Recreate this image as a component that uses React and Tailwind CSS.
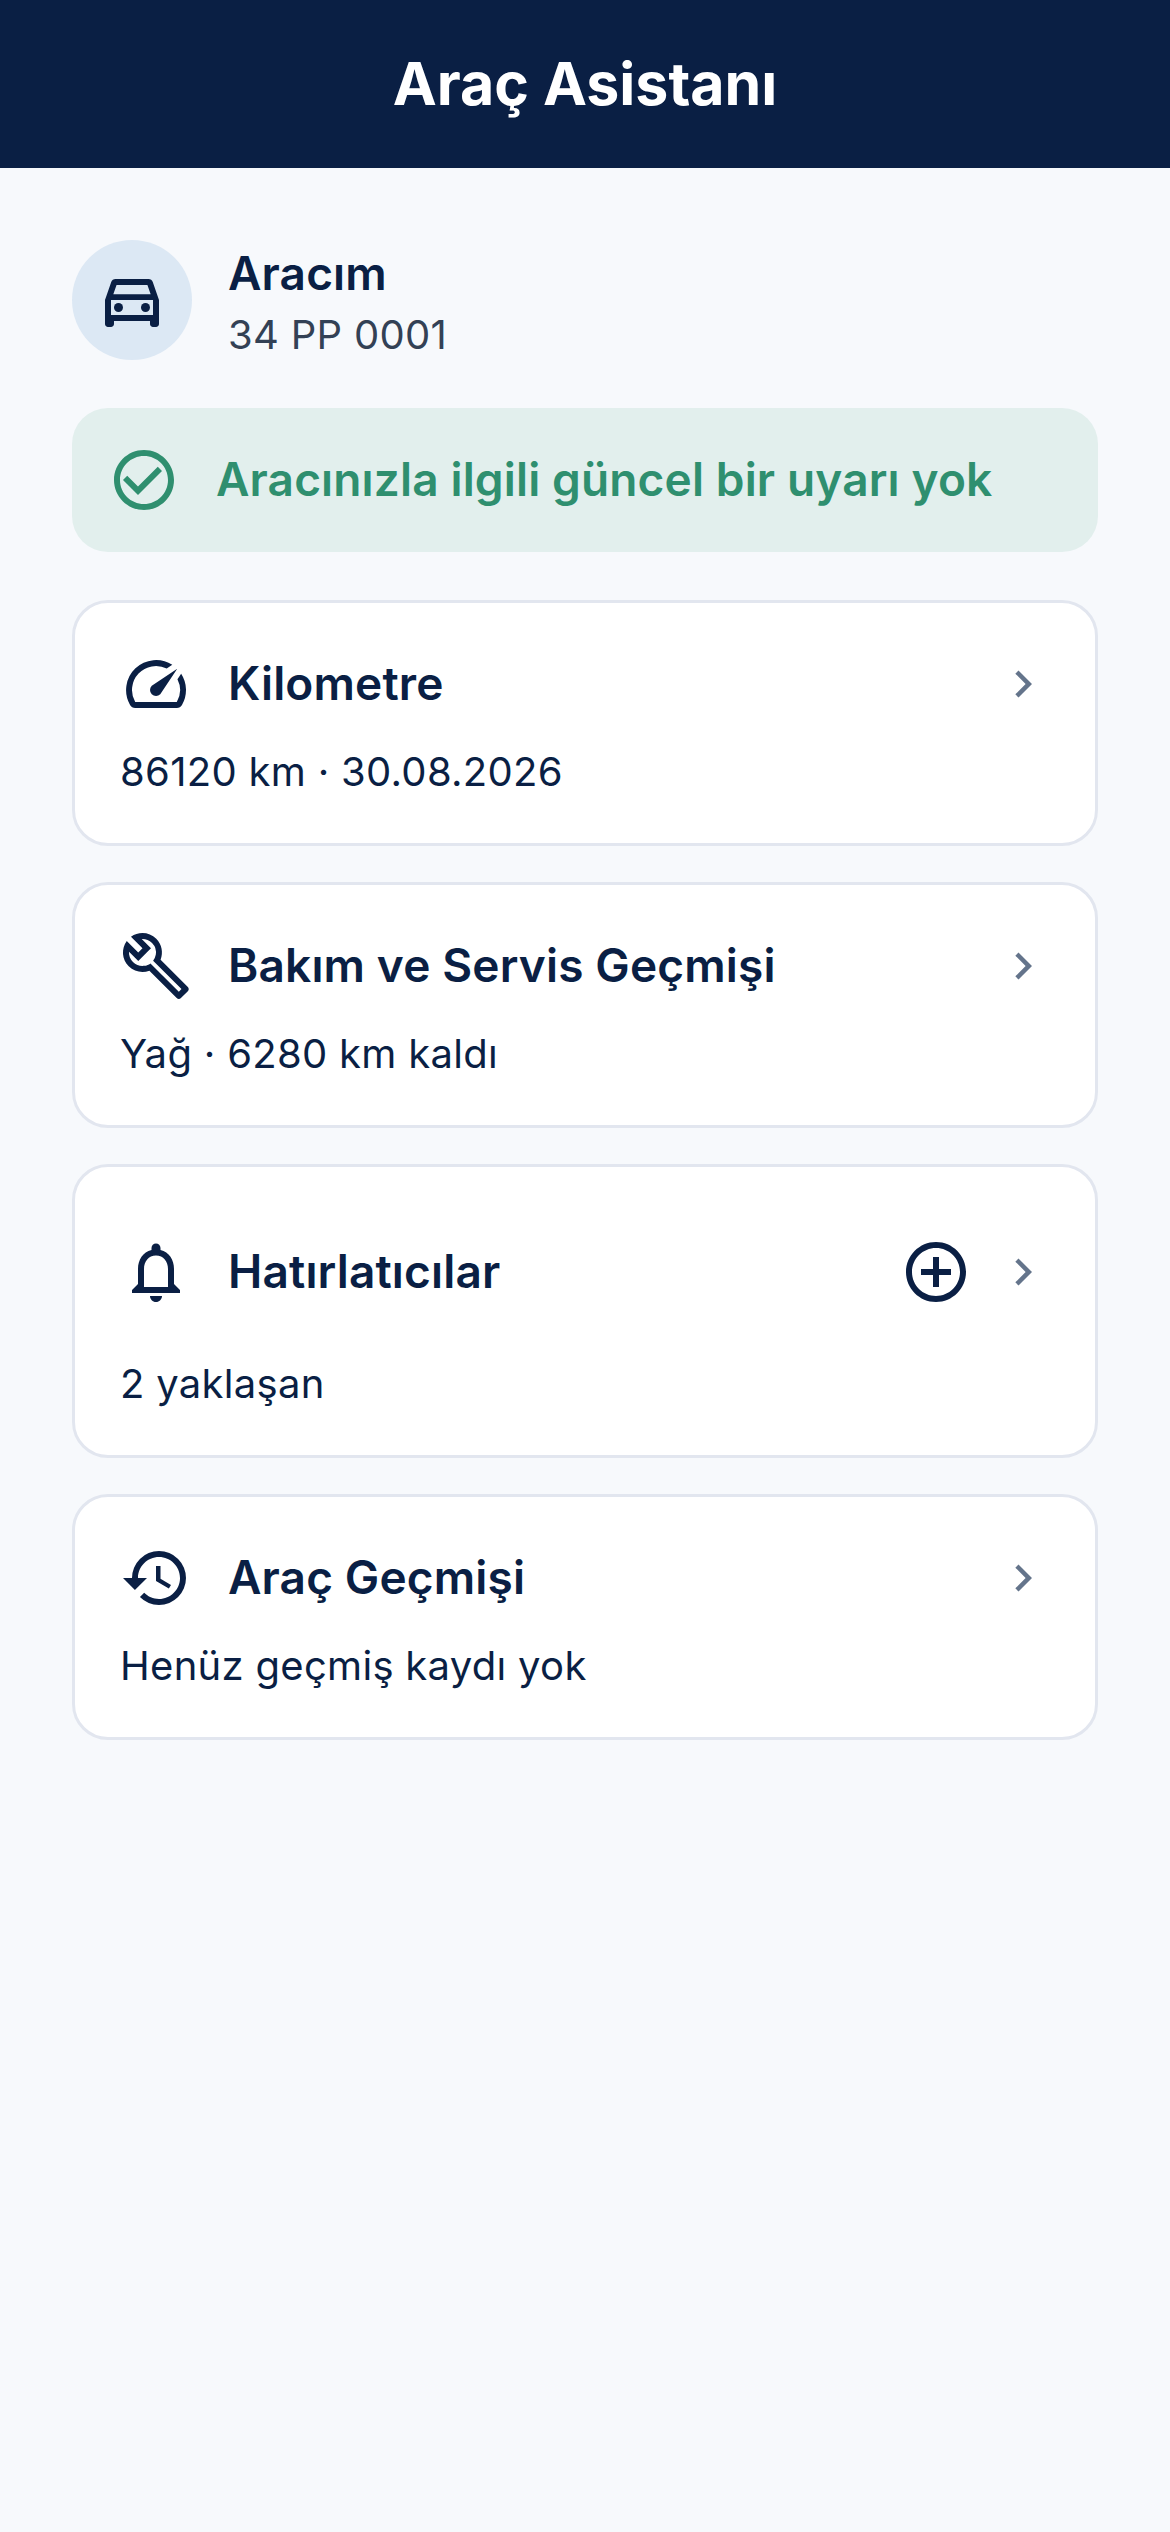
import {
  MdOutlineDirectionsCar,
  MdCheckCircleOutline,
  MdSpeed,
  MdOutlineBuild,
  MdOutlineNotifications,
  MdHistory,
  MdAddCircleOutline,
  MdChevronRight,
} from "react-icons/md";

const Card = ({ icon: Icon, title, subtitle, withAdd }) => (
  <div className="rounded-[36px] border-[3px] border-[#e2e6ef] bg-white p-[45px]">
    <div className="flex items-center">
      <Icon className="h-[72px] w-[72px] shrink-0 text-[#0a1f44]" />
      <div className="ml-[36px] flex-1 pb-[2px] text-[46px] leading-[70px] tracking-[0.15px] text-[#0a1f44] [font-weight:560]">
        {title}
      </div>
      {withAdd && (
        <button className="p-[24px]">
          <MdAddCircleOutline className="h-[72px] w-[72px] text-[#0a1f44]" />
        </button>
      )}
      <MdChevronRight className="h-[54px] w-[54px] shrink-0 text-[#64748b]" />
    </div>
    <div className="mt-[26px] text-[40px] leading-[52px] tracking-[0.3px] text-[#0a1f44]">
      {subtitle}
    </div>
  </div>
);

export default function App() {
  return (
    <div className="flex min-h-[2532px] flex-col bg-[#f7f9fc] font-['Inter',sans-serif]">
      <header className="flex h-[168px] items-center justify-center bg-[#0a1f44]">
        <h1 className="text-[59px] font-bold text-white">Araç Asistanı</h1>
      </header>

      <main className="flex flex-col p-[72px]">
        <div className="flex h-[120px] items-center gap-[36px]">
          <div className="flex h-[120px] w-[120px] items-center justify-center rounded-full bg-[#dce8f4]">
            <MdOutlineDirectionsCar className="h-[72px] w-[72px] text-[#0a1f44]" />
          </div>
          <div className="pt-[3px]">
            <div className="text-[46px] leading-[60px] tracking-[0.15px] text-[#0a1f44] [font-weight:560]">
              Aracım
            </div>
            <div className="mt-[6px] text-[40px] leading-[51px] tracking-[0.3px] text-[#334155]">
              34 PP 0001
            </div>
          </div>
        </div>

        <div className="mt-[48px] flex h-[144px] items-center gap-[36px] rounded-[36px] bg-[#e2efed] px-[36px]">
          <MdCheckCircleOutline className="h-[72px] w-[72px] shrink-0 text-[#2f8f6f]" />
          <span className="pb-[2px] text-[46px] tracking-[0.15px] text-[#2f8f6f] [font-weight:560]">
            Aracınızla ilgili güncel bir uyarı yok
          </span>
        </div>

        <div className="mt-[48px] flex flex-col gap-[36px]">
          <Card icon={MdSpeed} title="Kilometre" subtitle="86120 km · 30.08.2026" />
          <Card icon={MdOutlineBuild} title="Bakım ve Servis Geçmişi" subtitle="Yağ · 6280 km kaldı" />
          <Card icon={MdOutlineNotifications} title="Hatırlatıcılar" subtitle="2 yaklaşan" withAdd />
          <Card icon={MdHistory} title="Araç Geçmişi" subtitle="Henüz geçmiş kaydı yok" />
        </div>
      </main>
    </div>
  );
}
